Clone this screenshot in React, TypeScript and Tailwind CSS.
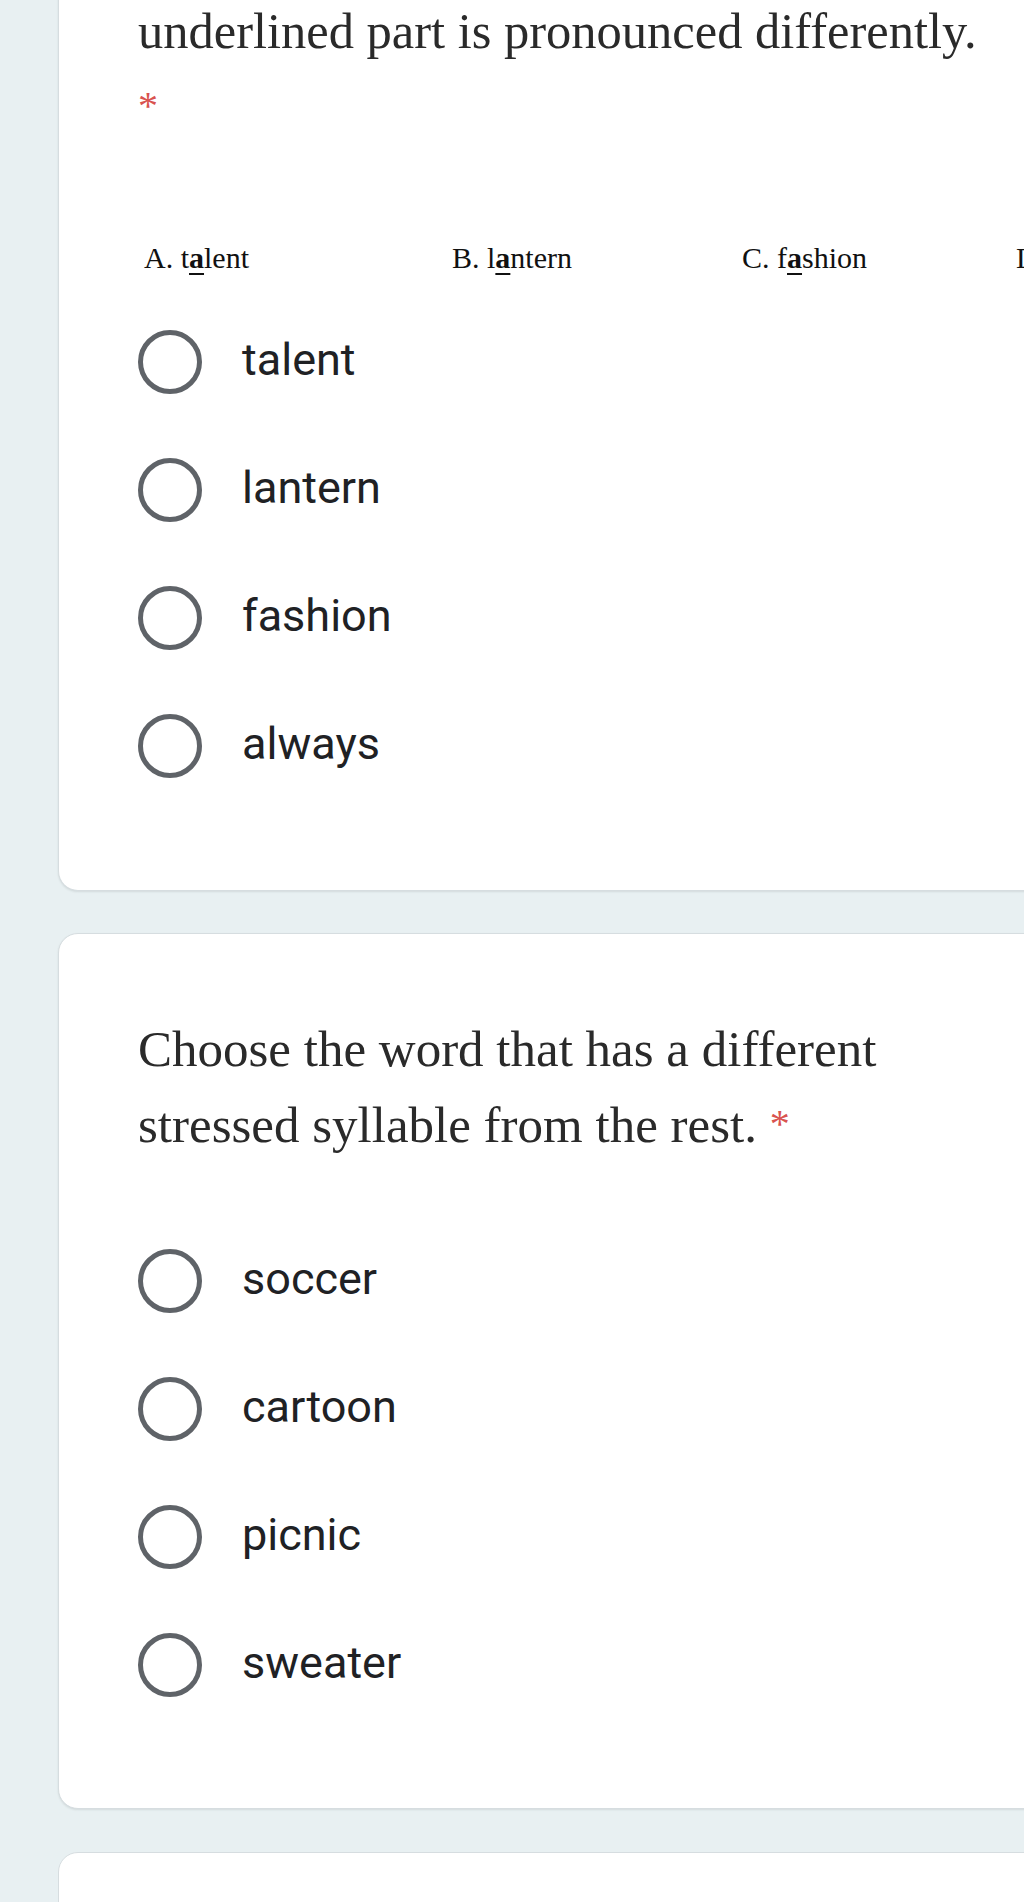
import React from "react";

const serif = { fontFamily: '"Liberation Serif", "Times New Roman", serif' };
const sans = { fontFamily: 'Roboto, "Noto Sans", Arial, sans-serif' };

function Radio({ label }: { label: string }) {
  return (
    <div className="flex h-[128px] items-center">
      <div className="h-[64px] w-[64px] shrink-0 rounded-full border-[5px] border-[#5f6368]" />
      <span
        className="ml-[40px] pb-[4px] text-[45px] text-[#202124]"
        style={sans}
      >
        {label}
      </span>
    </div>
  );
}

function Choice({ letter, pre, mark, post, width }: { letter: string; pre: string; mark: string; post: string; width: string }) {
  return (
    <div className={`shrink-0 whitespace-nowrap ${width}`}>
      {letter}. {pre}
      <span className="font-bold underline decoration-2 underline-offset-[5px]">{mark}</span>
      {post}
    </div>
  );
}

// red required mark, smaller than the question text
function Star() {
  return <span className="align-[5px] text-[40px] leading-none text-[#d9534f]">*</span>;
}

export default function App() {
  const first = ["talent", "lantern", "fashion", "always"];
  const second = ["soccer", "cartoon", "picnic", "sweater"];

  return (
    <div className="h-[1902px] w-[1024px] overflow-hidden bg-[#e8f0f2]">
      {/* card 1, its top is above the viewport */}
      <div className="ml-[58px] w-[1020px] rounded-b-[20px] border border-t-0 border-[#d6dde0] bg-white pb-[80px] pl-[79px] shadow-[0_1px_2px_rgba(60,64,67,0.12)]">
        <div className="-mt-[7px] text-[50.5px] leading-[76px] text-[#2a2a2a]" style={serif}>
          <div className="whitespace-nowrap">underlined part is pronounced differently.</div>
          <div>
            <Star />
          </div>
        </div>

        <div className="ml-[6px] mt-[95px] flex h-[36px] text-[30px] leading-[36px] text-[#111]" style={serif}>
          <Choice letter="A" pre="t" mark="a" post="lent" width="w-[308px]" />
          <Choice letter="B" pre="l" mark="a" post="ntern" width="w-[290px]" />
          <Choice letter="C" pre="f" mark="a" post="shion" width="w-[274px]" />
          <Choice letter="D" pre="" mark="a" post="lways" width="w-[200px]" />
        </div>

        <div className="mt-[22px]">
          {first.map((w) => (
            <Radio key={w} label={w} />
          ))}
        </div>
      </div>

      {/* card 2 */}
      <div className="ml-[58px] mt-[42px] w-[1020px] rounded-[20px] border border-[#d6dde0] bg-white pb-[79px] pl-[79px] pt-[77px] shadow-[0_1px_2px_rgba(60,64,67,0.12)]">
        <div className="text-[51px] leading-[76px] text-[#2a2a2a]" style={serif}>
          <div className="whitespace-nowrap">Choose the word that has a different</div>
          <div className="whitespace-nowrap">
            stressed syllable from the rest. <Star />
          </div>
        </div>

        <div className="mt-[54px]">
          {second.map((w) => (
            <Radio key={w} label={w} />
          ))}
        </div>
      </div>

      {/* card 3, only its top edge shows */}
      <div className="ml-[58px] mt-[43px] h-[200px] w-[1020px] rounded-[20px] border border-[#d6dde0] bg-white" />
    </div>
  );
}
